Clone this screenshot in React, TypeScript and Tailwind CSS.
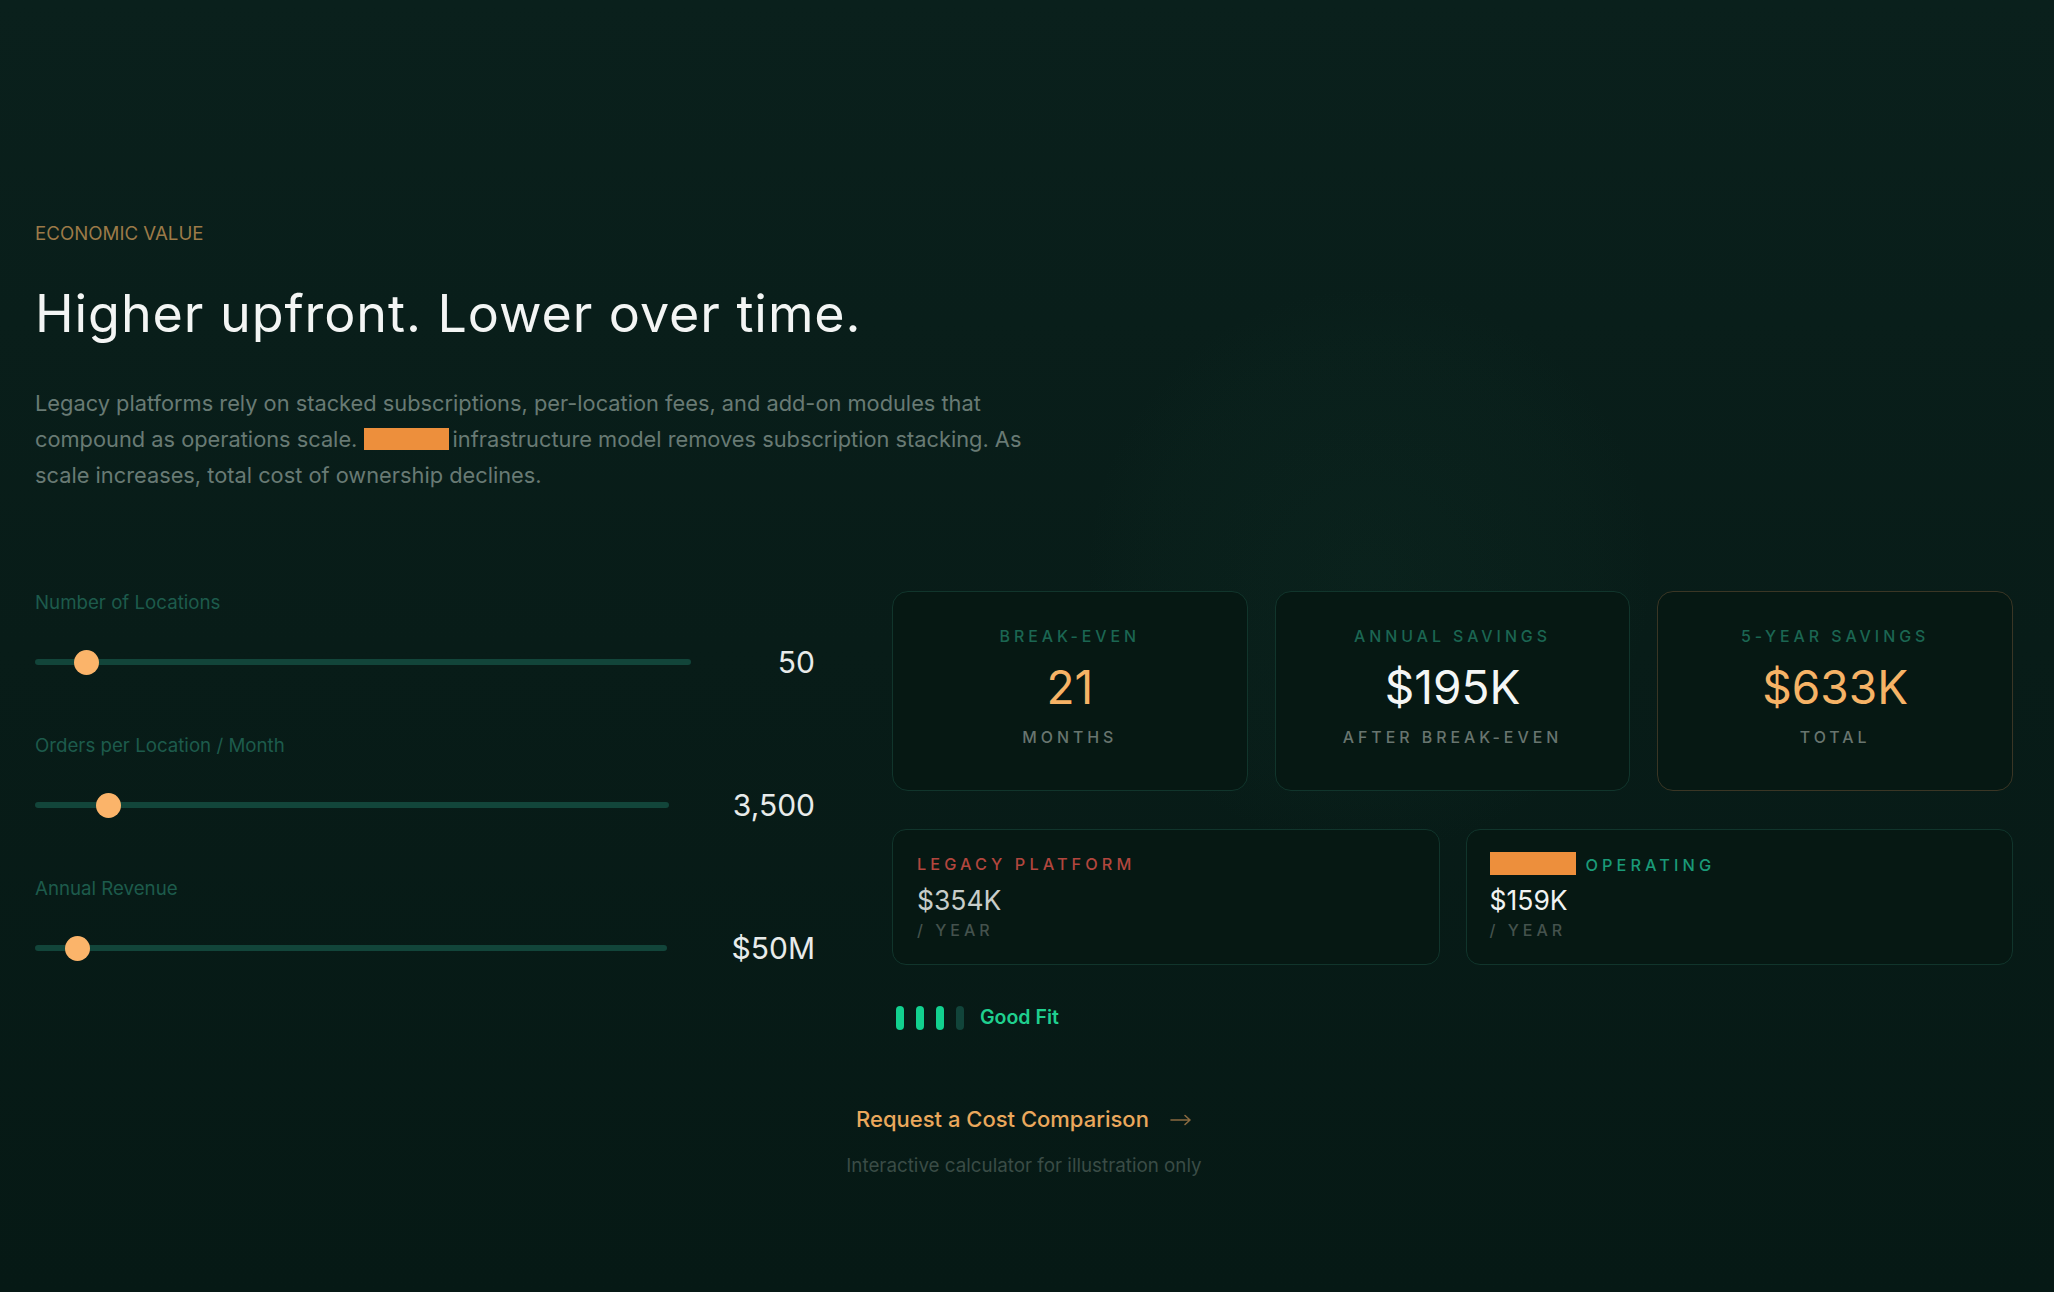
import React from "react";

const sliders = [
  { label: "Number of Locations", value: "50", pct: 6 },
  { label: "Orders per Location / Month", value: "3,500", pct: 9.6 },
  { label: "Annual Revenue", value: "$50M", pct: 4.7 },
];

function Slider({ label, value, pct }: { label: string; value: string; pct: number }) {
  return (
    <div className="flex flex-col">
      <div className="text-[18.7px] leading-[27px] text-[#1d5b4c]">{label}</div>
      <div className="mt-[26px] flex items-center gap-16">
        <div className="relative h-[40px] flex-1">
          <div className="absolute left-0 right-0 top-[17px] h-[6px] rounded-full bg-[#12453a]" />
          <div
            className="absolute top-[7.5px] h-[25px] w-[25px] rounded-full bg-[#fbb46a]"
            style={{ left: `${pct}%` }}
          />
        </div>
        <div className="min-w-[60px] text-right text-[30px] leading-[40px] text-[#e8ebea]">{value}</div>
      </div>
    </div>
  );
}

function StatCard({
  label,
  value,
  sub,
  valueClass,
  borderClass,
}: {
  label: string;
  value: string;
  sub: string;
  valueClass: string;
  borderClass: string;
}) {
  return (
    <div className={`flex h-[200px] flex-col items-center rounded-[16px] border bg-[#061813] pt-[33px] ${borderClass}`}>
      <div className="text-[15.9px] font-medium uppercase leading-[24px] tracking-[0.25em] text-[#1b6652]">{label}</div>
      <div className={`mt-[11px] text-[46px] leading-[55px] ${valueClass}`}>{value}</div>
      <div className="mt-[11px] text-[15.9px] font-medium uppercase leading-[24px] tracking-[0.25em] text-[#68756f]">{sub}</div>
    </div>
  );
}

export default function App() {
  return (
    <div
      className="relative h-[1292px] w-full overflow-hidden bg-gradient-to-b from-[#0a201c] via-[#081c18] to-[#061915]"
      style={{ fontFamily: "Inter, 'Noto Sans', sans-serif" }}
    >
      <div className="pointer-events-none absolute left-[1090px] top-[290px] h-[560px] w-[560px] rounded-full bg-[radial-gradient(circle,rgba(20,60,48,0.16)_0%,rgba(20,60,48,0.07)_55%,rgba(0,0,0,0)_72%)]" />
      <div className="relative pl-[35px] pr-[41px] pt-[220px]">
        <div className="text-[18.7px] leading-[27px] text-[#9c7a48]">ECONOMIC VALUE</div>
        <h1 className="mt-[38px] text-[52px] font-normal leading-[57px] tracking-[0.018em] text-[#f3f5f4]">
          Higher upfront. Lower over time.
        </h1>
        <p className="mt-[43px] max-w-[1010px] text-[21.8px] leading-[36px] text-[#687a74]">
          Legacy platforms rely on stacked subscriptions, per-location fees, and add-on modules that compound as operations scale.{" "}
          <span className="mr-[4px] inline-block h-[22px] w-[85px] bg-[#ed8f3c] align-[-3px]" />
          infrastructure model removes subscription stacking. As scale increases, total cost of ownership declines.
        </p>

        <div className="mt-[96px] flex items-start gap-[77px]">
          <div className="flex w-[780px] flex-col gap-[50px]">
            {sliders.map((s) => (
              <Slider key={s.label} {...s} />
            ))}
          </div>

          <div className="flex flex-1 flex-col pt-[2px]">
            <div className="grid grid-cols-3 gap-[27px]">
              <StatCard label="Break-even" value="21" sub="Months" valueClass="text-[#f6b366]" borderClass="border-[#11352c]" />
              <StatCard label="Annual Savings" value="$195K" sub="After Break-even" valueClass="text-[#f4f6f5]" borderClass="border-[#11352c]" />
              <StatCard label="5-Year Savings" value="$633K" sub="Total" valueClass="text-[#f6b366]" borderClass="border-[#3a3625]" />
            </div>

            <div className="mt-[38px] grid grid-cols-2 gap-[26px]">
              <div className="flex h-[136px] flex-col rounded-[14px] border border-[#11352c] bg-[#061813] pl-[24px] pt-[22px]">
                <div className="text-[16.3px] font-medium uppercase leading-[24px] tracking-[0.25em] text-[#b2463e]">Legacy Platform</div>
                <div className="mt-[9px] text-[26.5px] leading-[30px] text-[#c7cdca]">$354K</div>
                <div className="mt-[3px] text-[16px] font-medium uppercase leading-[24px] tracking-[0.25em] text-[#44524d]">/ Year</div>
              </div>
              <div className="flex h-[136px] flex-col rounded-[14px] border border-[#11352c] bg-[#061813] pl-[23px] pt-[20px]">
                <div className="flex items-center gap-[10px]">
                  <span className="inline-block h-[23px] w-[86px] bg-[#ed8f3c]" />
                  <span className="pt-[3px] text-[16.3px] font-medium uppercase leading-[24px] tracking-[0.25em] text-[#1a9a78]">Operating</span>
                </div>
                <div className="mt-[8px] text-[26.5px] leading-[30px] text-[#f1f3f2]">$159K</div>
                <div className="mt-[3px] text-[16px] font-medium uppercase leading-[24px] tracking-[0.25em] text-[#44524d]">/ Year</div>
              </div>
            </div>

            <div className="mt-[38px] flex items-center gap-4 pl-[4px]">
              <div className="flex items-center gap-3">
                <span className="h-[24px] w-[8px] rounded-full bg-[#12d18f]" />
                <span className="h-[24px] w-[8px] rounded-full bg-[#12d18f]" />
                <span className="h-[24px] w-[8px] rounded-full bg-[#12d18f]" />
                <span className="h-[24px] w-[8px] rounded-full bg-[#11443a]" />
              </div>
              <span className="text-[19.5px] font-semibold text-[#1fd08f]">Good Fit</span>
            </div>
          </div>
        </div>

        <div className="mt-[70px] flex flex-col items-center">
          <div className="flex items-center gap-[21px]">
            <span className="text-[22px] font-medium leading-[34px] text-[#eaa85c]">Request a Cost Comparison</span>
            <svg width="22" height="12" viewBox="0 0 22 12" fill="none" className="mt-[2px]">
              <path d="M1 6H20M15 1.5L20 6L15 10.5" stroke="#8a6a40" strokeWidth="1.6" strokeLinecap="round" strokeLinejoin="round" />
            </svg>
          </div>
          <div className="mt-[16px] text-[18.8px] leading-[27px] text-[#3a4c46]">Interactive calculator for illustration only</div>
        </div>
      </div>
    </div>
  );
}
